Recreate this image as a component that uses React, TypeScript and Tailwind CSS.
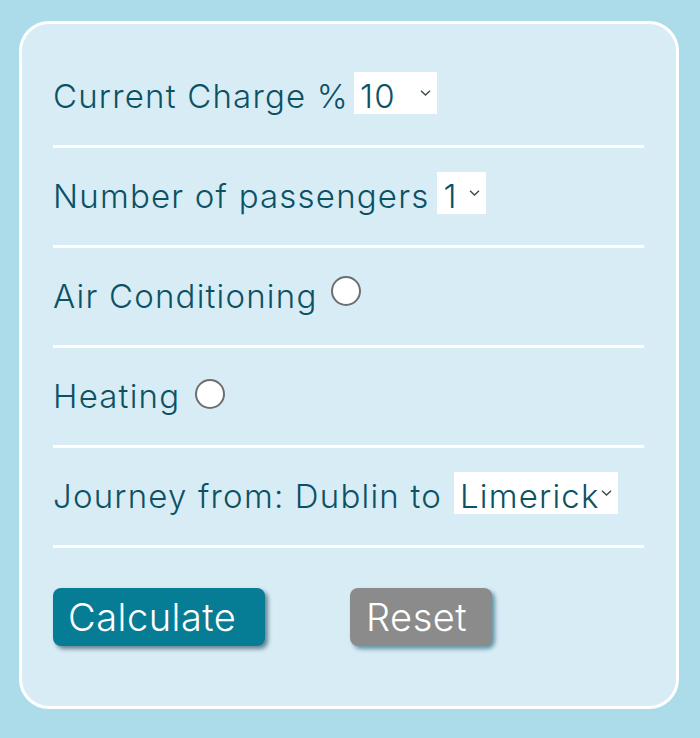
import React from 'react';

const Chevron: React.FC = () => (
  <svg width="11" height="7" viewBox="0 0 11 7" className="pointer-events-none absolute right-[6px] top-1/2 -translate-y-1/2">
    <path d="M1 1.2 L5.5 5.5 L10 1.2" fill="none" stroke="#3a4a50" strokeWidth="1.4" />
  </svg>
);

interface SelectProps {
  value: string;
  options: string[];
  width: string;
}

const Picker: React.FC<SelectProps> = ({ value, options, width }) => (
  <span className={`relative inline-flex h-[42px] bg-white ${width}`}>
    <select
      defaultValue={value}
      className="h-full w-full appearance-none bg-white pl-[6px] pr-[18px] text-[33px] font-light tracking-[1.2px] text-[#0b5264] outline-none"
    >
      {options.map((o) => (
        <option key={o}>{o}</option>
      ))}
    </select>
    <Chevron />
  </span>
);

const Radio: React.FC = () => (
  <span className="inline-block h-[30px] w-[30px] rounded-full border-2 border-[#6b6f72] bg-white" />
);

const Row: React.FC<{ children: React.ReactNode }> = ({ children }) => (
  <>
    <div className="flex h-[97px] items-center">{children}</div>
    <div className="h-[3px] w-full bg-white" />
  </>
);

export default function App() {
  return (
    <div
      className="min-h-[738px] w-[700px] bg-[#acdcea] pt-[21px] pl-[19px]"
      style={{ fontFamily: 'Inter, "Open Sans", sans-serif' }}
    >
      <div className="w-[660px] h-[688px] rounded-[30px] border-[3px] border-white bg-[#d8ecf6] pt-[24px] pl-[31px] pr-[31px]">
        <div className="w-[591px] text-[33px] font-light tracking-[1.2px] text-[#0b5264]">
          <Row>
            <span>Current Charge %</span>
            <span className="ml-[5px]">
              <Picker value="10" options={['10', '20', '30', '40', '50']} width="w-[83px]" />
            </span>
          </Row>
          <Row>
            <span>Number of passengers</span>
            <span className="ml-[8px]">
              <Picker value="1" options={['1', '2', '3', '4', '5']} width="w-[49px]" />
            </span>
          </Row>
          <Row>
            <span>Air Conditioning</span>
            <span className="ml-[14px] -mt-[12px] flex">
              <Radio />
            </span>
          </Row>
          <Row>
            <span>Heating</span>
            <span className="ml-[15px] -mt-[6px] flex">
              <Radio />
            </span>
          </Row>
          <Row>
            <span>Journey from: Dublin to</span>
            <span className="ml-[12px]">
              <Picker value="Limerick" options={['Limerick', 'Cork', 'Galway']} width="w-[164px]" />
            </span>
          </Row>
          <div className="mt-[40px] flex items-center">
            <button className="h-[58px] w-[212px] rounded-[8px] bg-[#067c95] pl-[15px] text-left text-[38px] font-light tracking-[0.5px] text-white shadow-[3px_3px_4px_rgba(10,50,60,0.55)]">
              Calculate
            </button>
            <button className="ml-[85px] h-[58px] w-[142px] rounded-[8px] bg-[#8b8b8b] pl-[16px] text-left text-[38px] font-light tracking-[0.5px] text-white shadow-[3px_3px_4px_rgba(20,90,110,0.6)]">
              Reset
            </button>
          </div>
        </div>
      </div>
    </div>
  );
}
